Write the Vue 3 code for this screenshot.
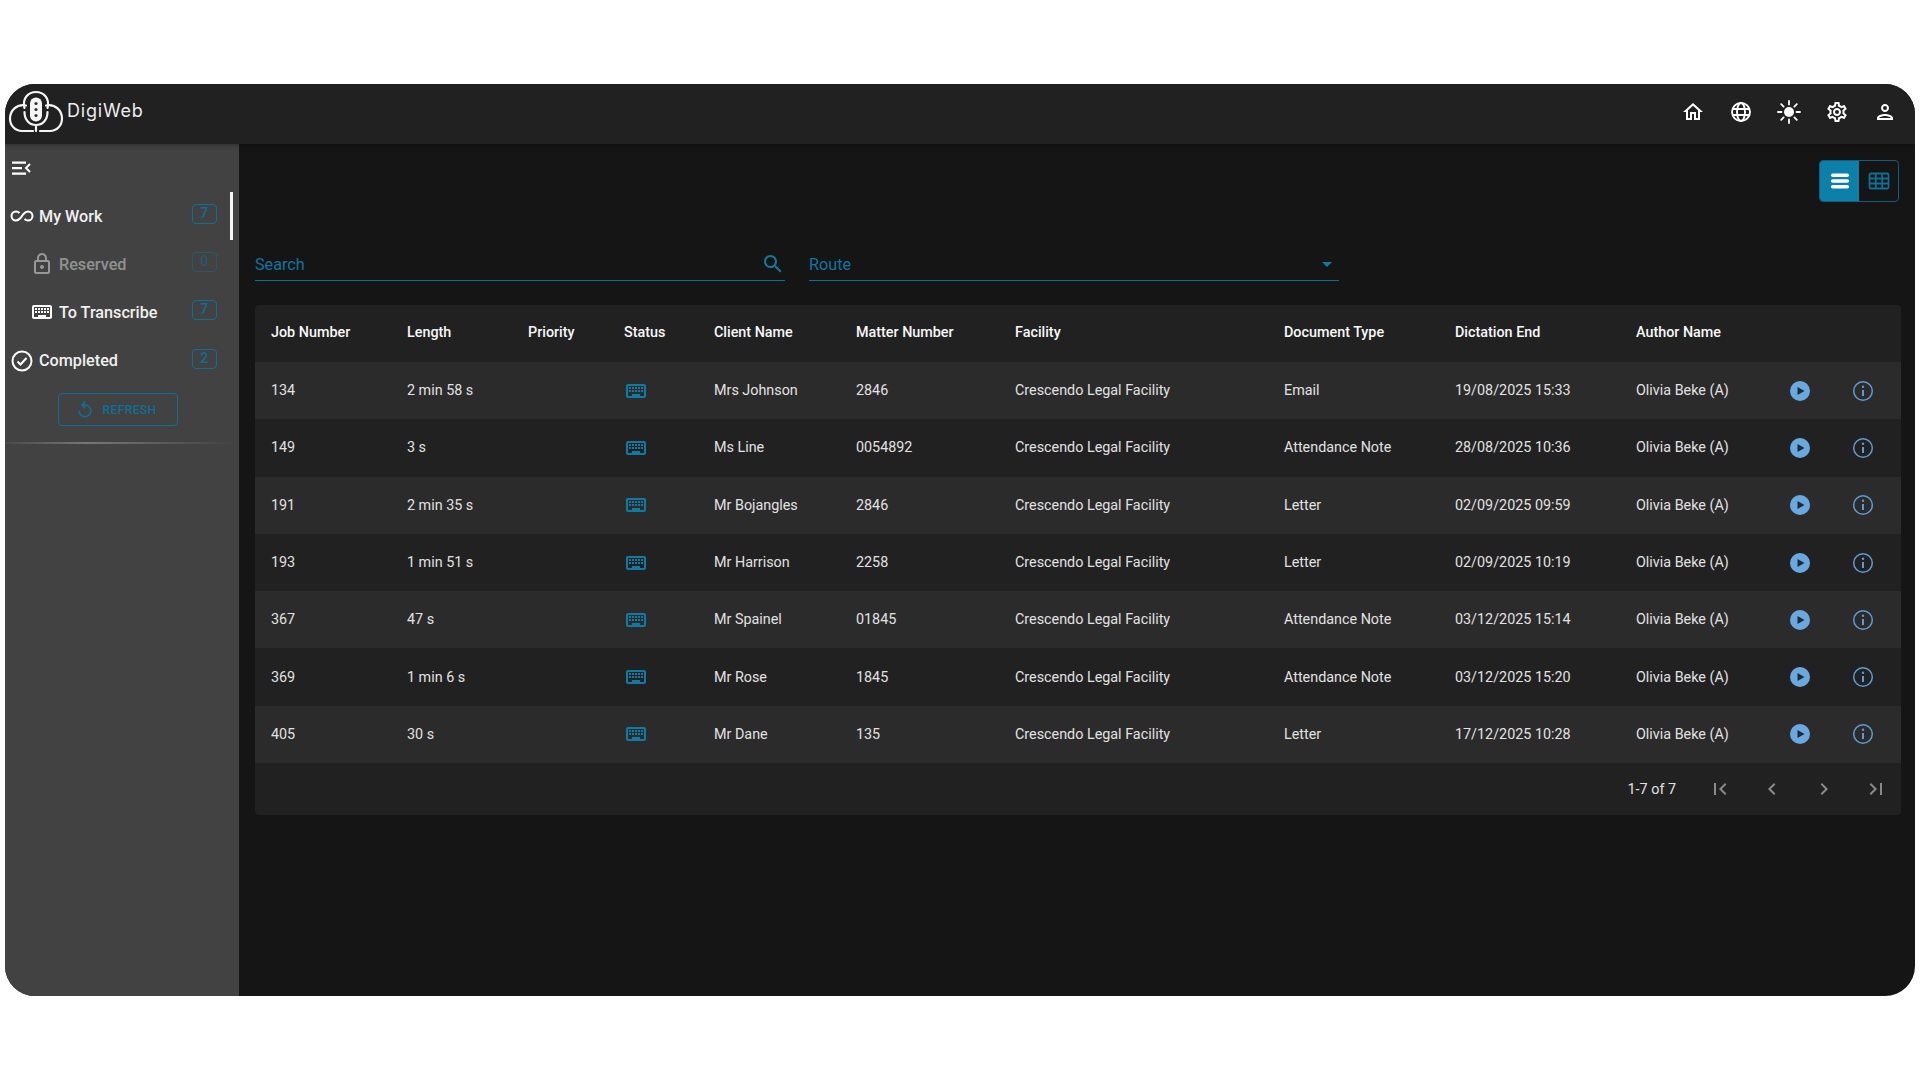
<script setup>
const jobs = [
  { id: 134, length: '2 min 58 s', client: 'Mrs Johnson', matter: '2846', doc: 'Email', end: '19/08/2025 15:33' },
  { id: 149, length: '3 s', client: 'Ms Line', matter: '0054892', doc: 'Attendance Note', end: '28/08/2025 10:36' },
  { id: 191, length: '2 min 35 s', client: 'Mr Bojangles', matter: '2846', doc: 'Letter', end: '02/09/2025 09:59' },
  { id: 193, length: '1 min 51 s', client: 'Mr Harrison', matter: '2258', doc: 'Letter', end: '02/09/2025 10:19' },
  { id: 367, length: '47 s', client: 'Mr Spainel', matter: '01845', doc: 'Attendance Note', end: '03/12/2025 15:14' },
  { id: 369, length: '1 min 6 s', client: 'Mr Rose', matter: '1845', doc: 'Attendance Note', end: '03/12/2025 15:20' },
  { id: 405, length: '30 s', client: 'Mr Dane', matter: '135', doc: 'Letter', end: '17/12/2025 10:28' },
];

const columns = ['Job Number', 'Length', 'Priority', 'Status', 'Client Name', 'Matter Number', 'Facility', 'Document Type', 'Dictation End', 'Author Name'];
const keyboard = 'M20 5H4c-1.1 0-2 .9-2 2v10c0 1.1.9 2 2 2h16c1.1 0 2-.9 2-2V7c0-1.1-.9-2-2-2zm0 12H4V7h16v10zM11 8h2v2h-2V8zm0 3h2v2h-2v-2zM8 8h2v2H8V8zm0 3h2v2H8v-2zm-1 2H5v-2h2v2zm0-3H5V8h2v2zm9 7H8v-2h8v2zm0-4h-2v-2h2v2zm0-3h-2V8h2v2zm3 3h-2v-2h2v2zm0-3h-2V8h2v2z';
</script>

<template>
  <div class="window">
    <header class="topbar">
      <div class="brand">
        <svg class="logo" viewBox="0 0 62 50" fill="none" stroke="#f5f5f5" stroke-width="2.200" stroke-linecap="round">
          <path d="M19.500 23C17 13 23.500 7 31 7s14 6 11.500 16" />
          <path d="M21 20.500C11.500 18.500 5 26 5 33.500S10.500 46 17 46h11" />
          <path d="M41 20.500C50.500 18.500 57 26 57 33.500S51.500 46 45 46H35" />
          <rect x="25" y="12.500" width="12" height="24" rx="6" fill="#f5f5f5" stroke="none" />
          <circle cx="31" cy="18.500" r="1.600" fill="#333" stroke="none" />
          <circle cx="31" cy="24.500" r="1.600" fill="#333" stroke="none" />
          <circle cx="31" cy="30.500" r="1.600" fill="#333" stroke="none" />
          <path d="M19.500 27c0 8 5 13 11.500 13s11.500-5 11.500-13M31 40v6" />
        </svg>
        <span class="brand-name">DigiWeb</span>
      </div>
      <div class="top-icons">
        <svg viewBox="0 0 24 24" fill="#fff"><path d="M12 5.690l5 4.500V18h-2v-6H9v6H7v-7.810l5-4.500M12 3 2 12h3v8h6v-6h2v6h6v-8h3L12 3z" /></svg>
        <svg viewBox="0 0 24 24" fill="none" stroke="#fff" stroke-width="1.900"><circle cx="12" cy="12" r="9" /><ellipse cx="12" cy="12" rx="4" ry="9" /><path d="M3.500 9h17M3.500 15h17" /></svg>
        <svg viewBox="0 0 24 24" fill="#fff"><circle cx="12" cy="12" r="5" /><path d="M12 1v3.500M12 19.500V23M1 12h3.500M19.500 12H23M4.200 4.200l2.400 2.400M17.400 17.400l2.400 2.400M4.200 19.800l2.400-2.400M17.400 6.600l2.400-2.400" stroke="#fff" stroke-width="1.800" stroke-linecap="round" /></svg>
        <svg viewBox="0 0 24 24" fill="#fff"><path d="M19.430 12.980c.04-.32.070-.64.070-.98 0-.34-.03-.66-.07-.98l2.110-1.650c.19-.15.240-.42.120-.64l-2-3.460c-.09-.16-.26-.25-.44-.25-.06 0-.12.010-.17.03l-2.490 1c-.52-.4-1.080-.73-1.690-.98l-.38-2.650C14.460 2.180 14.250 2 14 2h-4c-.25 0-.46.18-.49.42l-.38 2.650c-.61.25-1.170.59-1.690.98l-2.490-1c-.06-.02-.12-.03-.18-.03-.17 0-.34.09-.43.25l-2 3.460c-.13.22-.07.49.12.64l2.110 1.650c-.04.32-.07.65-.07.98 0 .33.030.66.070.98l-2.110 1.650c-.19.15-.24.42-.12.64l2 3.460c.09.16.26.25.44.25.06 0 .12-.01.17-.03l2.490-1c.52.4 1.080.73 1.690.98l.38 2.650c.03.24.24.42.49.42h4c.25 0 .46-.18.49-.42l.38-2.650c.61-.25 1.170-.59 1.690-.98l2.490 1c.06.02.12.03.18.03.17 0 .34-.09.43-.25l2-3.460c.12-.22.07-.49-.12-.64l-2.110-1.650zm-1.980-1.710c.04.31.05.52.05.73 0 .21-.02.43-.05.73l-.14 1.130.89.700 1.080.84-.7 1.210-1.270-.51-1.040-.42-.9.680c-.43.32-.84.56-1.250.73l-1.060.43-.16 1.130-.2 1.350h-1.400l-.19-1.350-.16-1.130-1.060-.43c-.43-.18-.83-.41-1.230-.71l-.91-.7-1.060.43-1.270.51-.7-1.210 1.080-.84.89-.7-.14-1.130c-.03-.31-.05-.54-.05-.74s.02-.43.05-.73l.14-1.130-.89-.7-1.080-.84.7-1.210 1.270.51 1.040.42.9-.68c.43-.32.84-.56 1.250-.73l1.060-.43.16-1.130.2-1.350h1.390l.19 1.350.16 1.130 1.060.43c.43.18.83.41 1.230.71l.91.700 1.060-.43 1.270-.51.7 1.210-1.070.85-.89.7.14 1.130zM12 8c-2.210 0-4 1.790-4 4s1.790 4 4 4 4-1.790 4-4-1.790-4-4-4zm0 6c-1.100 0-2-.9-2-2s.9-2 2-2 2 .9 2 2-.9 2-2 2z" /></svg>
        <svg viewBox="0 0 24 24" fill="#fff"><path d="M12 6a2 2 0 1 1 0 4 2 2 0 0 1 0-4m0 10c2.700 0 5.800 1.290 6 2H6c.23-.72 3.310-2 6-2M12 4C9.790 4 8 5.790 8 8s1.790 4 4 4 4-1.790 4-4-1.790-4-4-4zm0 10c-2.670 0-8 1.340-8 4v2h16v-2c0-2.660-5.330-4-8-4z" /></svg>
      </div>
    </header>

    <div class="body">
      <aside class="sidebar">
        <div class="toggle">
          <svg viewBox="0 0 24 24" fill="#fff"><path d="M3 5.500h14v2.200H3zM3 11h10v2.200H3zM3 16.500h14v2.200H3z" /><path d="M21 8l-4 4 4 4" fill="none" stroke="#fff" stroke-width="2" /></svg>
        </div>
        <nav class="nav">
          <div class="nav-item active">
            <svg class="nav-icon" viewBox="0 0 24 24" fill="none" stroke="#fff" stroke-width="2"><path d="M9.500 9C8.500 8 7.300 7.500 6 7.500a4.500 4.500 0 0 0 0 9c1.800 0 3-.8 4.500-2.500l3-4C15 8.300 16.200 7.500 18 7.500a4.500 4.500 0 0 1 0 9c-1.300 0-2.500-.5-3.500-1.500" /></svg>
            <span class="label">My Work</span>
            <span class="badge">7</span>
          </div>
          <div class="nav-item sub dim">
            <svg class="nav-icon" viewBox="0 0 24 24" fill="#fff"><path d="M18 8h-1V6c0-2.760-2.240-5-5-5S7 3.240 7 6v2H6c-1.100 0-2 .9-2 2v10c0 1.100.9 2 2 2h12c1.100 0 2-.9 2-2V10c0-1.100-.9-2-2-2zM9 6c0-1.660 1.340-3 3-3s3 1.340 3 3v2H9V6zm9 14H6V10h12v10zm-6-3c1.100 0 2-.9 2-2s-.9-2-2-2-2 .9-2 2 .9 2 2 2z" /></svg>
            <span class="label">Reserved</span>
            <span class="badge">0</span>
          </div>
          <div class="nav-item sub">
            <svg class="nav-icon" viewBox="0 0 24 24" fill="#fff"><path :d="keyboard" /></svg>
            <span class="label">To Transcribe</span>
            <span class="badge">7</span>
          </div>
          <div class="nav-item">
            <svg class="nav-icon" viewBox="0 0 24 24" fill="none" stroke="#fff" stroke-width="2"><circle cx="12" cy="12" r="9.500" /><path d="M7.500 12.500l3 3 6-6.500" /></svg>
            <span class="label">Completed</span>
            <span class="badge">2</span>
          </div>
        </nav>
        <button class="refresh">
          <svg viewBox="0 0 24 24" fill="#0f6f94"><path d="M12 5V1L7 6l5 5V7c3.310 0 6 2.690 6 6s-2.690 6-6 6-6-2.690-6-6H4c0 4.420 3.580 8 8 8s8-3.580 8-8-3.580-8-8-8z" /></svg>
          REFRESH
        </button>
        <div class="divider"></div>
      </aside>

      <main class="content">
        <div class="view-switch">
          <span class="view-btn on">
            <svg viewBox="0 0 24 24" fill="#fff"><rect x="3" y="4.500" width="18" height="3.500" rx="1.700" /><rect x="3" y="10.200" width="18" height="3.500" rx="1.700" /><rect x="3" y="16" width="18" height="3.500" rx="1.700" /></svg>
          </span>
          <span class="view-btn">
            <svg viewBox="0 0 24 24" fill="none" stroke="#0f6f94" stroke-width="1.800"><rect x="2.500" y="4.500" width="19" height="15" rx="1.500" /><path d="M2.500 9.500h19M2.500 14.500h19M8.800 4.500v15M15.200 4.500v15" /></svg>
          </span>
        </div>

        <div class="filters">
          <div class="field search">
            <span>Search</span>
            <svg viewBox="0 0 24 24" fill="#0f7ba3"><path d="M15.500 14h-.79l-.28-.27C15.410 12.590 16 11.110 16 9.500 16 5.910 13.090 3 9.500 3S3 5.910 3 9.500 5.910 16 9.500 16c1.610 0 3.090-.59 4.230-1.570l.27.28v.79l5 4.990L20.490 19l-4.990-5zm-6 0C7.010 14 5 11.990 5 9.500S7.010 5 9.500 5 14 7.010 14 9.500 11.990 14 9.500 14z" /></svg>
          </div>
          <div class="field route">
            <span>Route</span>
            <i class="caret"></i>
          </div>
        </div>

        <div class="table-card">
          <table>
            <colgroup>
              <col style="width: 136px" /><col style="width: 121px" /><col style="width: 96px" /><col style="width: 90px" />
              <col style="width: 142px" /><col style="width: 159px" /><col style="width: 269px" /><col style="width: 171px" />
              <col style="width: 181px" /><col style="width: 155px" /><col style="width: 63px" /><col />
            </colgroup>
            <thead>
              <tr>
                <th v-for="c in columns" :key="c">{{ c }}</th>
                <th></th>
                <th></th>
              </tr>
            </thead>
            <tbody>
              <tr v-for="job in jobs" :key="job.id">
                <td>{{ job.id }}</td>
                <td>{{ job.length }}</td>
                <td></td>
                <td><svg class="status" viewBox="0 0 24 24" fill="#0f7ba3"><path :d="keyboard" /></svg></td>
                <td>{{ job.client }}</td>
                <td>{{ job.matter }}</td>
                <td>Crescendo Legal Facility</td>
                <td>{{ job.doc }}</td>
                <td>{{ job.end }}</td>
                <td>Olivia Beke (A)</td>
                <td class="action">
                  <svg viewBox="0 0 24 24"><circle cx="12" cy="12" r="10" fill="#6aa9e0" /><path d="M9.500 8l7 4-7 4z" fill="#1f2a35" /></svg>
                </td>
                <td class="action">
                  <svg viewBox="0 0 24 24" fill="none" stroke="#5f9bd0" stroke-width="1.500"><circle cx="12" cy="12" r="9.300" /><path d="M12 11v6" stroke-width="2" /><circle cx="12" cy="7.800" r="1.200" fill="#5f9bd0" stroke="none" /></svg>
                </td>
              </tr>
            </tbody>
          </table>
          <div class="pager">
            <span class="count">1-7 of 7</span>
            <svg viewBox="0 0 24 24" fill="#8a8a8a"><path d="M18.410 16.590 13.820 12l4.590-4.590L17 6l-6 6 6 6zM6 6h2v12H6z" /></svg>
            <svg viewBox="0 0 24 24" fill="#8a8a8a"><path d="M15.410 7.410 14 6l-6 6 6 6 1.410-1.410L10.830 12z" /></svg>
            <svg viewBox="0 0 24 24" fill="#8a8a8a"><path d="M10 6 8.590 7.410 13.170 12l-4.580 4.590L10 18l6-6z" /></svg>
            <svg viewBox="0 0 24 24" fill="#8a8a8a"><path d="M5.590 7.410 10.180 12l-4.590 4.590L7 18l6-6-6-6zM16 6h2v12h-2z" /></svg>
          </div>
        </div>
      </main>
    </div>
  </div>
</template>

<style>
html, body { margin: 0; background: #fff; }
</style>

<style scoped>
.window {
  position: relative;
  margin: 84px 0 0 5px;
  width: 1910px;
  height: 912px;
  border-radius: 30px;
  overflow: hidden;
  background: #151515;
  font-family: Roboto, "Liberation Sans", sans-serif;
  color: #fff;
}

.topbar {
  height: 60px;
  background: #212121;
  display: flex;
  align-items: center;
  justify-content: space-between;
  box-shadow: 0 2px 4px rgba(0,0,0,0.25);
  position: relative;
  z-index: 2;
}
.brand { display: flex; align-items: center; }
.logo { width: 62px; height: 50px; margin-bottom: 8px; }
.brand-name {
  font-family: Inter, "Open Sans", sans-serif;
  font-size: 18px;
  letter-spacing: 0.8px;
  margin-left: 0;
  margin-bottom: 7px;
  color: #eee;
}
.top-icons { display: flex; align-items: center; gap: 24px; padding-right: 18px; margin-bottom: 5px; }
.top-icons svg { width: 24px; height: 24px; display: block; }

.body { display: flex; height: 852px; }

.sidebar { width: 234px; background: #424242; flex: none; }
.toggle { height: 46px; padding: 12px 0 0 4px; box-sizing: border-box; }
.toggle svg { width: 24px; height: 24px; display: block; }
.nav { margin-top: 2px; }
.nav-item {
  position: relative;
  height: 48.200px;
  display: flex;
  align-items: center;
  padding-left: 5px;
  font-size: 16.200px;
  font-weight: 500;
  color: #f0f0f0;
}
.nav-item.sub { padding-left: 25px; }
.nav-item.dim .label, .nav-item.dim .nav-icon { opacity: 0.45; }
.nav-icon { width: 24px; height: 24px; flex: none; }
.label { margin-left: 5px; }
.badge {
  position: absolute;
  left: 186.500px;
  top: 12px;
  width: 25.500px;
  height: 20px;
  box-sizing: border-box;
  border: 1px solid #0e7094;
  border-radius: 4px;
  font-size: 14px;
  color: #0f6f94;
  text-align: center;
  line-height: 17px;
}
.nav-item.dim .badge { opacity: 0.5; }
.active::after {
  content: "";
  position: absolute;
  left: 225px;
  top: 0;
  width: 3px;
  height: 48px;
  background: #f5f5f5;
}
.refresh {
  display: flex;
  align-items: center;
  justify-content: center;
  gap: 8px;
  margin: 8.500px 0 0 53px;
  width: 120px;
  height: 33px;
  background: transparent;
  border: 1px solid #0e7094;
  border-radius: 4px;
  color: #0f6f94;
  font-family: Roboto, sans-serif;
  font-size: 12.200px;
  font-weight: 500;
  letter-spacing: 0.3px;
  padding: 0 5px 0 0;
}
.refresh svg { width: 20px; height: 20px; }
.divider {
  height: 2px;
  margin-top: 16px;
  background: linear-gradient(90deg, #4a4a4a, #777 35%, #424242 98%);
}

.content { flex: 1; padding: 16px 14px 0 16px; min-width: 0; }

.view-switch {
  display: flex;
  width: 80px;
  height: 42px;
  margin: 0 2px 0 auto;
  border: 1px solid #0d5f7e;
  border-radius: 4px;
  overflow: hidden;
  box-sizing: border-box;
}
.view-btn { flex: 1; display: flex; align-items: center; justify-content: center; }
.view-btn.on { background: #0d80a9; }
.view-btn svg { width: 24px; height: 24px; }

.filters { display: flex; gap: 24px; margin-top: 38px; }
.field {
  height: 41px;
  width: 530px;
  box-sizing: border-box;
  border-bottom: 1px solid #0c6f93;
  display: flex;
  align-items: center;
  justify-content: space-between;
  padding-top: 8px;
  color: #0d76a0;
  font-size: 16.200px;
}
.field svg { width: 24px; height: 24px; }
.caret {
  width: 0;
  height: 0;
  border: 5px solid transparent;
  border-top-color: #0f7ba3;
  border-bottom: 0;
  margin-right: 7px;
}

.table-card {
  margin-top: 24px;
  background: #212121;
  border-radius: 4px;
  overflow: hidden;
}
table { width: 100%; border-collapse: collapse; table-layout: fixed; }
th, td {
  text-align: left;
  padding: 0 0 0 16px;
  font-size: 14.350px;
  white-space: nowrap;
}
th { height: 57px; font-weight: 500; color: #f8f8f8; padding-bottom: 2px; box-sizing: border-box; }
td { height: 57.300px; color: #e2e2e2; font-weight: 450; }
td.action { padding-left: 13px; }
tbody tr:nth-child(odd) { background: #2b2b2b; }
.status { width: 24px; height: 24px; display: block; }
.action svg { width: 24px; height: 24px; display: block; }
.pager {
  height: 52px;
  display: flex;
  align-items: center;
  justify-content: flex-end;
  gap: 28px;
  padding-right: 13px;
}
.pager svg { width: 24px; height: 24px; }
.count { font-size: 14.350px; font-weight: 450; color: #e2e2e2; margin-right: 4px; }
</style>
